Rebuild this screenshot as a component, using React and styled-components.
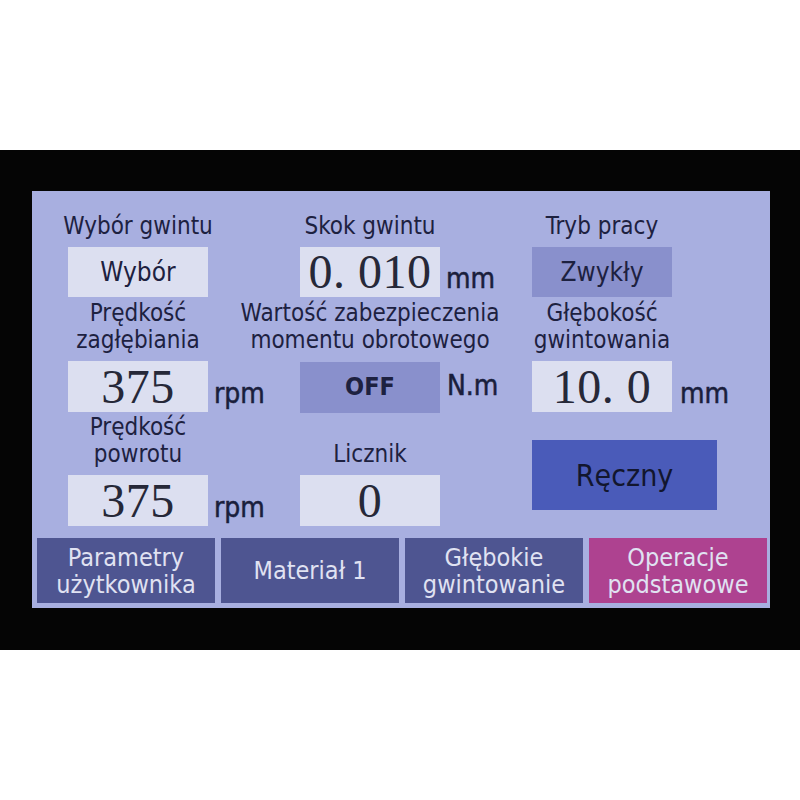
import React from "react";
import styled, { createGlobalStyle } from "styled-components";

const GlobalStyle = createGlobalStyle`
  html, body {
    margin: 0;
    padding: 0;
    background: #ffffff;
  }
`;

const Page = styled.div`
  width: 800px;
  height: 800px;
  display: flex;
  align-items: center;
  background: #ffffff;
`;

const Bezel = styled.div`
  width: 100%;
  height: 500px;
  background: #050505;
  padding: 41px 30px 42px 32px;
  box-sizing: border-box;
`;

const Screen = styled.div`
  height: 100%;
  background: #a8afe0;
  box-sizing: border-box;
  padding: 0 3px 5px 5px;
  display: flex;
  flex-direction: column;
  font-family: "DejaVu Sans Condensed", "DejaVu Sans", "Liberation Sans", sans-serif;
  font-stretch: condensed;
  color: #1d2140;
`;

const FieldRow = styled.div`
  display: grid;
  grid-template-columns: repeat(3, 232px);
  padding-left: 31px;
`;

const Field = styled.div`
  display: flex;
  flex-direction: column;
`;

const Label = styled.div`
  width: 140px;
  height: ${(p) => p.$h}px;
  box-sizing: border-box;
  padding-bottom: 7px;
  display: flex;
  flex-direction: column;
  justify-content: flex-end;
  align-items: center;
  font-size: 24px;
  line-height: 27px;

  & span {
    white-space: nowrap;
  }
`;

const ValueLine = styled.div`
  display: flex;
  align-items: baseline;
  height: ${(p) => p.$h}px;
`;

const Box = styled.div`
  width: 140px;
  height: 100%;
  flex: none;
  display: flex;
  align-items: center;
  justify-content: center;
  background: ${(p) => (p.$dark ? "#8990cc" : "#dcdff0")};
`;

const Number = styled.span`
  font-family: "Liberation Serif", "DejaVu Serif", serif;
  font-stretch: normal;
  font-size: 48px;
  line-height: 50px;
  color: #262838;
  letter-spacing: 0.5px;
`;

const BoxText = styled.span`
  font-size: ${(p) => (p.$bold ? 25 : 26)}px;
  font-weight: ${(p) => (p.$bold ? 600 : 400)};
  line-height: 50px;
`;

const Unit = styled.span`
  margin-left: ${(p) => p.$gap || 6}px;
  font-size: 28px;
  line-height: 50px;
  color: #1a1e3c;
  -webkit-text-stroke: 0.5px #1a1e3c;
`;

const ManualCell = styled.div`
  padding-top: 28px;
`;

const ManualButton = styled.button`
  width: 185px;
  height: 70px;
  border: none;
  background: #4a5bb9;
  color: #12162e;
  font-family: inherit;
  font-stretch: condensed;
  font-size: 30px;
  cursor: pointer;
`;

const Tabs = styled.div`
  margin-top: auto;
  display: grid;
  grid-template-columns: repeat(4, 178px);
  gap: 6px;
`;

const Tab = styled.button`
  height: 65px;
  border: none;
  padding: 0;
  background: ${(p) => (p.$active ? "#ae4290" : "#4e5591")};
  color: #e0e2f2;
  font-family: inherit;
  font-stretch: condensed;
  font-size: 25px;
  line-height: 27px;
  cursor: pointer;
`;

const TabLine = styled.span`
  display: block;
  white-space: nowrap;
`;

const tabs = [
  ["Parametry", "użytkownika"],
  ["Materiał 1"],
  ["Głębokie", "gwintowanie"],
  ["Operacje", "podstawowe"],
];

const FieldLabel = ({ lines, h }) => (
  <Label $h={h}>
    {lines.map((l) => (
      <span key={l}>{l}</span>
    ))}
  </Label>
);

export default function App() {
  return (
    <Page>
      <GlobalStyle />
      <Bezel>
        <Screen>
          <FieldRow>
            <Field>
              <FieldLabel h={56} lines={["Wybór gwintu"]} />
              <ValueLine $h={50}>
                <Box>
                  <BoxText>Wybór</BoxText>
                </Box>
              </ValueLine>
            </Field>
            <Field>
              <FieldLabel h={56} lines={["Skok gwintu"]} />
              <ValueLine $h={50}>
                <Box>
                  <Number>0. 010</Number>
                </Box>
                <Unit>mm</Unit>
              </ValueLine>
            </Field>
            <Field>
              <FieldLabel h={56} lines={["Tryb pracy"]} />
              <ValueLine $h={50}>
                <Box $dark>
                  <BoxText>Zwykły</BoxText>
                </Box>
              </ValueLine>
            </Field>
          </FieldRow>

          <FieldRow>
            <Field>
              <FieldLabel h={64} lines={["Prędkość", "zagłębiania"]} />
              <ValueLine $h={51}>
                <Box>
                  <Number>375</Number>
                </Box>
                <Unit>rpm</Unit>
              </ValueLine>
            </Field>
            <Field>
              <FieldLabel
                h={64}
                lines={["Wartość zabezpieczenia", "momentu obrotowego"]}
              />
              <ValueLine $h={51}>
                <Box $dark>
                  <BoxText $bold>OFF</BoxText>
                </Box>
                <Unit $gap={7}>N.m</Unit>
              </ValueLine>
            </Field>
            <Field>
              <FieldLabel h={64} lines={["Głębokość", "gwintowania"]} />
              <ValueLine $h={51}>
                <Box>
                  <Number>10. 0</Number>
                </Box>
                <Unit $gap={8}>mm</Unit>
              </ValueLine>
            </Field>
          </FieldRow>

          <FieldRow>
            <Field>
              <FieldLabel h={63} lines={["Prędkość", "powrotu"]} />
              <ValueLine $h={51}>
                <Box>
                  <Number>375</Number>
                </Box>
                <Unit>rpm</Unit>
              </ValueLine>
            </Field>
            <Field>
              <FieldLabel h={63} lines={["Licznik"]} />
              <ValueLine $h={51}>
                <Box>
                  <Number>0</Number>
                </Box>
              </ValueLine>
            </Field>
            <ManualCell>
              <ManualButton>Ręczny</ManualButton>
            </ManualCell>
          </FieldRow>

          <Tabs>
            {tabs.map((lines, i) => (
              <Tab key={lines[0]} $active={i === 3}>
                {lines.map((l) => (
                  <TabLine key={l}>{l}</TabLine>
                ))}
              </Tab>
            ))}
          </Tabs>
        </Screen>
      </Bezel>
    </Page>
  );
}
